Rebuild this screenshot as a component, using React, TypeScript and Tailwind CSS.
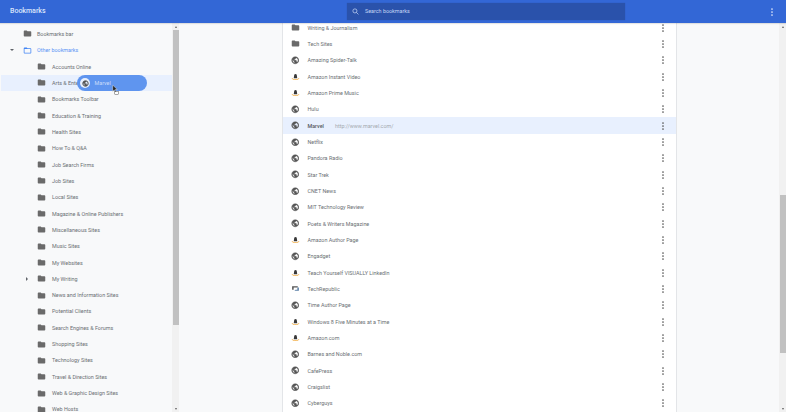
const FOLDER = "M10 4H4c-1.1 0-2 .9-2 2v12c0 1.1.9 2 2 2h16c1.1 0 2-.9 2-2V8c0-1.1-.9-2-2-2h-8l-2-2z";
const FOLDER_OPEN = "M20 6h-8l-2-2H4c-1.1 0-2 .9-2 2v12c0 1.1.9 2 2 2h16c1.1 0 2-.9 2-2V8c0-1.1-.9-2-2-2zm0 12H4V8h16v10z";
const GLOBE = "M12 2C6.48 2 2 6.48 2 12s4.48 10 10 10 10-4.48 10-10S17.52 2 12 2zm-1 17.93c-3.95-.49-7-3.85-7-7.93 0-.62.08-1.21.21-1.79L9 15v1c0 1.1.9 2 2 2v1.93zm6.9-2.54c-.26-.81-1-1.39-1.9-1.39h-1v-3c0-.55-.45-1-1-1H8v-2h2c.55 0 1-.45 1-1V7h2c1.1 0 2-.9 2-2v-.41c2.93 1.19 5 4.06 5 7.41 0 2.08-.8 3.97-2.1 5.39z";

type Kind = "folder" | "globe" | "amazon" | "tech";

function Icon({ kind }: { kind: Kind }) {
  if (kind === "amazon") {
    return (
      <svg viewBox="0 0 24 24" className="w-[9px] h-[9px] shrink-0">
        <path d="M9 6.500c.8-1.800 5.200-1.800 6 0 .8 2 .8 6 1.800 10H7.200c1-4 1-8 1.800-10z" fill="#3a3a3a" />
        <path d="M2.500 16c5 4.500 14 4.500 19 0l.5 2.200c-5.500 4.300-14.500 4.300-20 0z" fill="#f2aa3c" />
      </svg>
    );
  }
  if (kind === "tech") {
    return (
      <svg viewBox="0 0 24 24" className="w-[9px] h-[9px] shrink-0">
        <path d="M3 6h15v3H7v6H3z" fill="#555" />
        <path d="M21 9v9H9l3-3h5V9z" fill="#5a7fa6" />
      </svg>
    );
  }
  if (kind === "globe") {
    return (
      <svg viewBox="0 0 24 24" className="w-[8.500px] h-[8.500px] shrink-0">
        <path d={GLOBE} fill="#555" stroke="#555" strokeWidth="1.2" />
      </svg>
    );
  }
  return (
    <svg viewBox="0 0 24 24" className="w-[9px] h-[9px] shrink-0">
      <path d={FOLDER} fill="#6a6a6a" />
    </svg>
  );
}

function Kebab({ color = "#5f6368" }: { color?: string }) {
  return (
    <svg viewBox="0 0 4 16" className="block w-[2px] h-[8px]">
      <circle cx="2" cy="2" r="1.700" fill={color} />
      <circle cx="2" cy="8" r="1.700" fill={color} />
      <circle cx="2" cy="14" r="1.700" fill={color} />
    </svg>
  );
}

const tree: [string, number, ("down" | "right")?][] = [
  ["Bookmarks bar", 1],
  ["Other bookmarks", 1, "down"],
  ["Accounts Online", 2],
  ["Arts & Entertainment", 2],
  ["Bookmarks Toolbar", 2],
  ["Education & Training", 2],
  ["Health Sites", 2],
  ["How To & Q&A", 2],
  ["Job Search Firms", 2],
  ["Job Sites", 2],
  ["Local Sites", 2],
  ["Magazine & Online Publishers", 2],
  ["Miscellaneous Sites", 2],
  ["Music Sites", 2],
  ["My Websites", 2],
  ["My Writing", 2, "right"],
  ["News and Information Sites", 2],
  ["Potential Clients", 2],
  ["Search Engines & Forums", 2],
  ["Shopping Sites", 2],
  ["Technology Sites", 2],
  ["Travel & Direction Sites", 2],
  ["Web & Graphic Design Sites", 2],
  ["Web Hosts", 2],
];

const list: [string, Kind][] = [
  ["Writing & Journalism", "folder"],
  ["Tech Sites", "folder"],
  ["Amazing Spider-Talk", "globe"],
  ["Amazon Instant Video", "amazon"],
  ["Amazon Prime Music", "amazon"],
  ["Hulu", "globe"],
  ["Marvel", "globe"],
  ["Netflix", "globe"],
  ["Pandora Radio", "globe"],
  ["Star Trek", "globe"],
  ["CNET News", "globe"],
  ["MIT Technology Review", "globe"],
  ["Poets & Writers Magazine", "globe"],
  ["Amazon Author Page", "amazon"],
  ["Engadget", "globe"],
  ["Teach Yourself VISUALLY LinkedIn", "amazon"],
  ["TechRepublic", "tech"],
  ["Time Author Page", "globe"],
  ["Windows 8 Five Minutes at a Time", "amazon"],
  ["Amazon.com", "amazon"],
  ["Barnes and Noble.com", "globe"],
  ["CafePress", "globe"],
  ["Craigslist", "globe"],
  ["Cyberguys", "globe"],
];

function TreeRow({ name, level, arrow }: { name: string; level: number; arrow?: "down" | "right" }) {
  const open = name === "Other bookmarks";
  const hover = name === "Arts & Entertainment";
  const indent = hover ? "ml-[1px] pl-[35.5px] bg-[#e8f0fe]" : level === 1 ? "pl-[22.5px]" : "pl-[36.5px]";
  return (
    <div className={`relative flex items-center h-[16.33px] shrink-0 ${indent}`}>
      {arrow === "down" && <span className="absolute left-[10px] top-[7px] w-0 h-0 border-l-[2.5px] border-r-[2.5px] border-t-[2.5px] border-l-transparent border-r-transparent border-t-[#5f6368]" />}
      {arrow === "right" && <span className="absolute left-[25.5px] top-[6px] w-0 h-0 border-t-[2.5px] border-b-[2.5px] border-l-[2.5px] border-t-transparent border-b-transparent border-l-[#5f6368]" />}
      <svg viewBox="0 0 24 24" className="w-[9px] h-[9px] shrink-0">
        <path d={open ? FOLDER_OPEN : FOLDER} fill={open ? "#4285f4" : "#6a6a6a"} />
      </svg>
      <span className={`${level === 1 ? "ml-[5.5px]" : "ml-[6.5px]"} text-[5.4px] whitespace-nowrap ${open ? "text-[#5a94f5]" : "text-[#6b6f74]"}`}>{name}</span>
    </div>
  );
}

function Scrollbar({ top, height }: { top: string; height: string }) {
  return (
    <div className="w-[7px] shrink-0 h-full bg-[#f1f1f1] flex flex-col items-center relative">
      <span className="mt-[3px] w-0 h-0 border-l-[1.5px] border-r-[1.5px] border-b-[2px] border-l-transparent border-r-transparent border-b-[#606060]" />
      <div className={`absolute left-[1px] right-0 bg-[#c1c1c1] ${top} ${height}`} />
      <span className="absolute bottom-[2px] w-0 h-0 border-l-[1.5px] border-r-[1.5px] border-t-[2px] border-l-transparent border-r-transparent border-t-[#606060]" />
    </div>
  );
}

export default function App() {
  return (
    <div className="relative flex flex-col w-[786px] h-[412px] overflow-hidden bg-[#f8f9fa] font-['Roboto',sans-serif]">
      <header className="relative z-10 flex items-center h-[23px] shrink-0 bg-[#3367d6] shadow-[0_1px_1px_rgba(0,0,0,0.1)]">
        <span className="ml-[10px] w-[337px] text-[7px] font-medium text-[#dbe6fb]">Bookmarks</span>
        <div className="flex items-center w-[278px] h-[17px] bg-[#2a52ab] shadow-[0_0_1px_rgba(0,0,0,0.2)]">
          <svg viewBox="0 0 24 24" className="ml-[5px] w-[7px] h-[7px]" fill="none" stroke="#c5d5f5" strokeWidth="2.5">
            <circle cx="10" cy="10" r="7" />
            <path d="M15 15l7 7" />
          </svg>
          <span className="ml-[6px] text-[5.4px] text-[#c5d5f5]">Search bookmarks</span>
        </div>
        <div className="ml-[146px]">
          <Kebab color="#e3ebfb" />
        </div>
      </header>
      <div className="flex flex-1 min-h-0">
        <aside className="flex flex-col w-[172px] shrink-0 overflow-hidden pt-[2.8px]">
          {tree.map(([name, level, arrow]) => (
            <TreeRow key={name} name={name} level={level} arrow={arrow} />
          ))}
        </aside>
        <Scrollbar top="top-[7px]" height="h-[295px]" />
        <div className="w-[103px] shrink-0" />
        <section className="flex flex-col w-[395px] shrink-0 overflow-hidden bg-white border-l border-r border-[#e3e5e8]">
          <div className="flex flex-col mt-[-3.5px]">
            {list.map(([name, kind]) => {
              const sel = name === "Marvel";
              return (
                <div key={name} className={`flex items-center h-[16.33px] shrink-0 pl-[7.5px] pr-[12px] ${sel ? "bg-[#e8f0fe]" : ""}`}>
                  <span className="flex items-center justify-center w-[9px] shrink-0">
                    <Icon kind={kind} />
                  </span>
                  <span className={`ml-[8px] text-[5.4px] whitespace-nowrap ${sel ? "font-medium text-[#55595e]" : "text-[#6b6f74]"}`}>{name}</span>
                  {sel && <span className="ml-[11px] text-[5.4px] text-[#a4a9ae]">http://www.marvel.com/</span>}
                  <div className="ml-auto">
                    <Kebab color="#555" />
                  </div>
                </div>
              );
            })}
          </div>
        </section>
        <div className="flex-1" />
        <Scrollbar top="top-[172px]" height="h-[158px]" />
      </div>
      <div className="absolute left-[77px] top-[75px] flex items-center w-[70px] h-[16px] rounded-full bg-[#5f95ef] z-20">
        <span className="ml-[3px] flex items-center justify-center w-[10px] h-[10px] rounded-full bg-[#e8effc]">
          <svg viewBox="0 0 24 24" className="w-[7px] h-[7px]">
            <path d={GLOBE} fill="#555" stroke="#555" strokeWidth="1.2" />
          </svg>
        </span>
        <span className="ml-[4.5px] text-[5.4px] text-[#c9dbfa]">Marvel</span>
      </div>
      <svg viewBox="0 0 10 14" className="absolute left-[112px] top-[85px] w-[7px] h-[10px] z-30">
        <path d="M1 0v9l2.2-2 1.600 3.500 1.400-.7L4.600 6.400H7.500z" fill="#222" stroke="#fff" strokeWidth="0.6" />
        <rect x="4" y="9.500" width="5" height="4" fill="#fff" stroke="#333" strokeWidth="0.6" />
      </svg>
    </div>
  );
}
